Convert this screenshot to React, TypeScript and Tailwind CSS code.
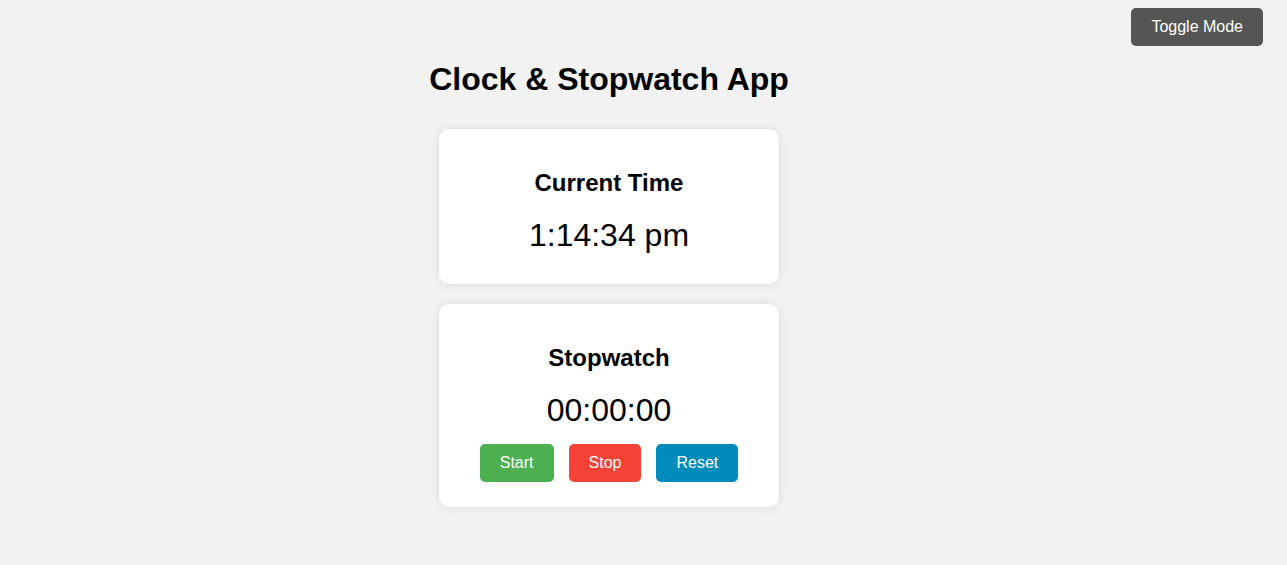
import React from "react";

const App: React.FC = () => {
  return (
    <div
      className="relative min-h-[565px] bg-[#f2f2f2] text-black"
      style={{ fontFamily: '"Liberation Sans", Arial, sans-serif' }}
    >
      <button className="absolute top-[8px] right-[24px] bg-[#555555] text-white text-[16px] leading-[18px] px-5 py-[10px] rounded-[5px]">
        Toggle Mode
      </button>

      <div className="flex flex-col items-center pt-[61px] pr-[69px]">
        <h1 className="text-[32px] leading-[37px] font-bold">Clock &amp; Stopwatch App</h1>

        <div className="mt-[31px] w-[340px] bg-white rounded-[10px] shadow-[0_0_10px_rgba(0,0,0,0.1)] px-5 pt-10 pb-[30px] flex flex-col items-center">
          <h2 className="text-[24px] leading-[28px] font-bold">Current Time</h2>
          <div className="mt-5 text-[32px] leading-[37px]">1:14:34 pm</div>
        </div>

        <div className="mt-5 w-[340px] bg-white rounded-[10px] shadow-[0_0_10px_rgba(0,0,0,0.1)] px-5 pt-10 pb-[25px] flex flex-col items-center">
          <h2 className="text-[24px] leading-[28px] font-bold">Stopwatch</h2>
          <div className="mt-5 text-[32px] leading-[37px]">00:00:00</div>
          <div className="mt-[15px] flex justify-center gap-[15px]">
            <button className="bg-[#4caf50] text-white text-[16px] leading-[18px] px-5 py-[10px] rounded-[5px]">
              Start
            </button>
            <button className="bg-[#f44336] text-white text-[16px] leading-[18px] px-5 py-[10px] rounded-[5px]">
              Stop
            </button>
            <button className="bg-[#008cba] text-white text-[16px] leading-[18px] px-5 py-[10px] rounded-[5px]">
              Reset
            </button>
          </div>
        </div>
      </div>
    </div>
  );
};

export default App;
